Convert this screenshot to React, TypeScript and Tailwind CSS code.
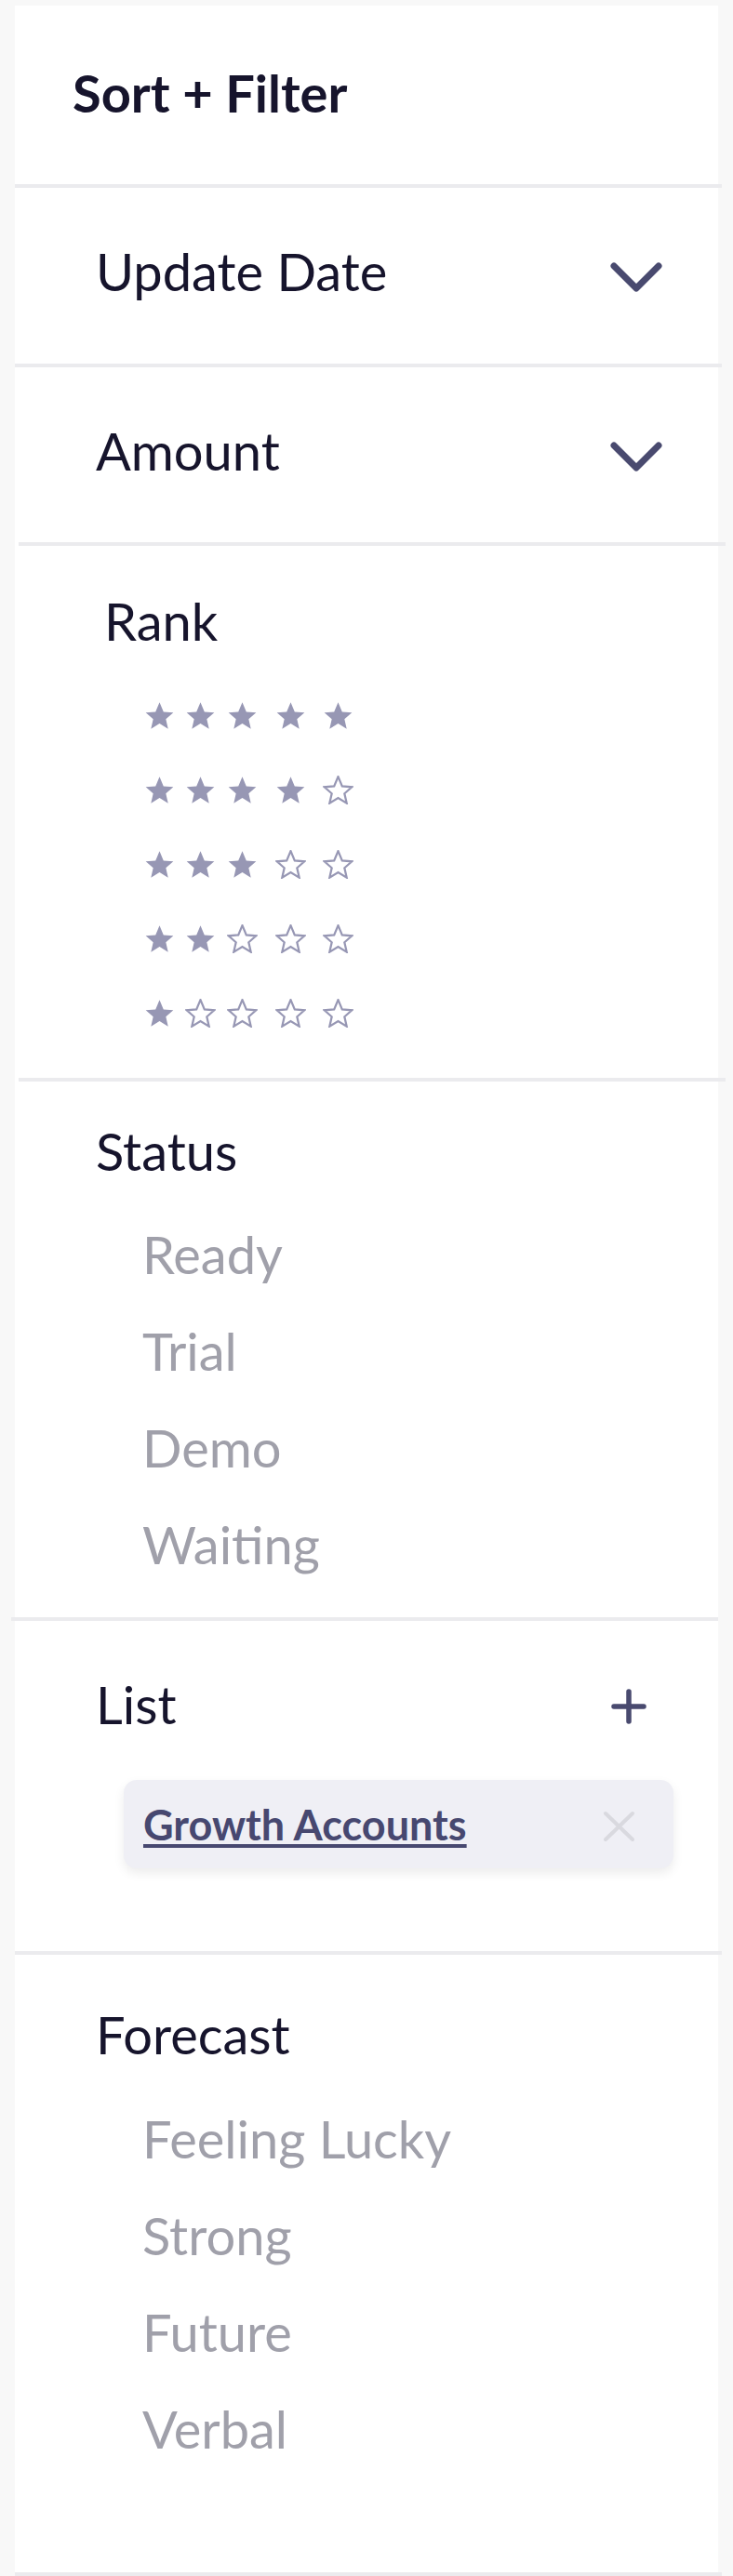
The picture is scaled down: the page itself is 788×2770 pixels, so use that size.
import React from 'react';

const starGaps = ['ml-0', 'ml-[11px]', 'ml-[12px]', 'ml-[19px]', 'ml-[18px]'];

function Star({ filled }: { filled: boolean }) {
  return (
    <svg width="33" height="31" viewBox="1.2 1.2 21.6 20.9" className="shrink-0">
      <path
        d="M12 2l2.9 6.9 7.1.6-5.4 4.7 1.6 7L12 17.4l-6.2 3.8 1.6-7L2 9.5l7.1-.6z"
        fill={filled ? '#9797b4' : '#ffffff'}
        stroke="#9797b4"
        strokeWidth={filled ? 0 : 1.5}
        strokeLinejoin="miter"
      />
    </svg>
  );
}

function Chevron() {
  return (
    <svg width="56" height="32" viewBox="0 0 56 32" className="mt-[18px] shrink-0">
      <path d="M4 4 L28 28 L52 4" fill="none" stroke="#494a6f" strokeWidth="7" strokeLinecap="round" strokeLinejoin="round" />
    </svg>
  );
}

function Divider({ className = '' }: { className?: string }) {
  return <div className={`h-1 w-[760px] bg-[#ebebee] ${className}`} />;
}

function OptionList({ items, className = '' }: { items: string[]; className?: string }) {
  return (
    <ul className={`ml-[50px] flex flex-col gap-[48px] ${className}`}>
      {items.map((item) => (
        <li key={item} className="text-[56px] leading-[56px] text-[#a0a0aa]">
          {item}
        </li>
      ))}
    </ul>
  );
}

export default function App() {
  const ranks = [5, 4, 3, 2, 1];

  return (
    <div className="min-h-screen bg-[#f8f8f8] pt-[6px] pl-4 font-['Lato',sans-serif] text-[#16142c]">
      <div className="w-[756px] bg-white">
        {/* header */}
        <div className="h-[192px] pt-[66px] pl-[62px]">
          <h1 className="text-[56px] leading-[56px] font-bold">Sort + Filter</h1>
        </div>
        <Divider />

        {/* collapsible sorts */}
        <div className="h-[189px] pt-[62px] pl-[87px] pr-[60px] flex items-start justify-between">
          <span className="text-[56px] leading-[56px]">Update Date</span>
          <Chevron />
        </div>
        <Divider />

        <div className="h-[188px] pt-[62px] pl-[87px] pr-[60px] flex items-start justify-between">
          <span className="text-[56px] leading-[56px]">Amount</span>
          <Chevron />
        </div>
        <Divider className="ml-1" />

        {/* rank */}
        <div className="h-[572px] pt-[53px] pl-[96px]">
          <div className="text-[56px] leading-[56px]">Rank</div>
          <div className="mt-[58px] ml-[43px] flex flex-col gap-[49px]">
            {ranks.map((r) => (
              <div key={r} className="flex">
                {[0, 1, 2, 3, 4].map((i) => (
                  <div key={i} className={starGaps[i]}>
                    <Star filled={i < r} />
                  </div>
                ))}
              </div>
            ))}
          </div>
        </div>
        <Divider className="ml-1" />

        {/* status */}
        <div className="h-[576px] pt-[47px] pl-[87px]">
          <div className="text-[56px] leading-[56px]">Status</div>
          <OptionList className="mt-[55px]" items={['Ready', 'Trial', 'Demo', 'Waiting']} />
        </div>
        <Divider className="-ml-1" />

        {/* list */}
        <div className="h-[355px] pt-[62px] pl-[87px]">
          <div className="pr-[77px] flex items-start justify-between">
            <span className="text-[56px] leading-[56px]">List</span>
            <svg width="38" height="38" viewBox="0 0 38 38" className="mt-[11px] shrink-0">
              <path d="M19 3 V35 M3 19 H35" fill="none" stroke="#494a6f" strokeWidth="5.5" strokeLinecap="round" />
            </svg>
          </div>
          <div className="mt-[53px] ml-[30px] w-[591px] h-[95px] rounded-[14px] bg-[#efeff5] shadow-[0_5px_12px_rgba(0,0,0,0.08)] pt-[26px] pl-[21px] pr-[41px] flex items-start justify-between">
            <span className="text-[45px] leading-[44px] font-bold text-[#474870] underline decoration-[4px] underline-offset-[4px]">
              Growth Accounts
            </span>
            <svg width="35" height="34" viewBox="0 0 35 34" className="mt-[7px] shrink-0">
              <path d="M3 3 L32 31 M32 3 L3 31" fill="none" stroke="#d9d9df" strokeWidth="4" strokeLinecap="round" />
            </svg>
          </div>
        </div>
        <Divider />

        {/* forecast */}
        <div className="h-[664px] pt-[58px] pl-[87px]">
          <div className="text-[56px] leading-[56px]">Forecast</div>
          <OptionList className="mt-[56px]" items={['Feeling Lucky', 'Strong', 'Future', 'Verbal']} />
        </div>
        <Divider />
      </div>
    </div>
  );
}
